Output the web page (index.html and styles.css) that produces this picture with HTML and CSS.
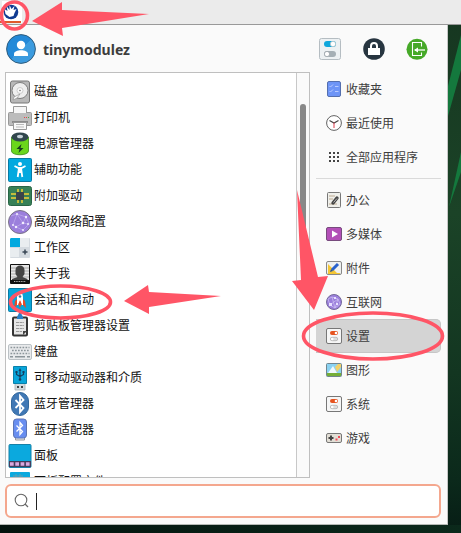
FILE: index.html
```
<!DOCTYPE html>
<html lang="zh-CN">
<head>
<meta charset="utf-8">
<title>Whisker Menu</title>
<link rel="stylesheet" href="styles.css">
</head>
<body>
<div class="desktop">
<svg class="wallpaper" viewBox="0 0 461 533">
<defs><linearGradient id="wall" x1="0" y1="0" x2="0" y2="1"><stop offset="0" stop-color="#163620"/><stop offset=".4" stop-color="#1b4327"/><stop offset=".7" stop-color="#133621"/><stop offset=".9" stop-color="#0b291b"/><stop offset="1" stop-color="#071d15"/></linearGradient>
<linearGradient id="floor"><stop offset="0" stop-color="#03130e"/><stop offset="1" stop-color="#0b291b"/></linearGradient></defs>
<path fill="url(#wall)" d="M0 0h461v533H0z"/><path fill="url(#floor)" d="M0 525h461v8H0z"/>
<path fill="#14783d" d="M461 35v35l-13 46V86z"/><path fill="#14783d" d="M461 152l-12 55 12-35z"/>
</svg>
<header class="panel">
<svg class="launcher" viewBox="0 0 24 24"><path fill="#fff" d="M2 1h20v22H2z"/><circle cx="11" cy="12" r="7.300" fill="#103b91"/><path fill="#fff" d="M4.500 9l3 2-1-5 3 4V5l2 4 3-3-1 4 3-1-2 4-1 3-4 1-4-3z"/><path fill="#e05a2c" d="M0 21h21v2H0z"/></svg>
</header>
<main class="menu">
<div class="profile">
<svg class="avatar" viewBox="0 0 30 30"><defs><linearGradient id="av" x1="0" y1="0" x2="1" y2="1"><stop offset=".5" stop-color="#2489d8"/><stop offset=".5" stop-color="#3b9bdf"/></linearGradient></defs><circle cx="15" cy="15" r="14.400" fill="url(#av)" stroke="#315d7d"/><circle cx="15" cy="11" r="4.200" fill="#fff"/><path fill="#fff" d="M8 22v-2c0-5 14-5 14 0v2z"/></svg>
<span class="username">tinymodulez</span>
<div class="actions">
<svg width="22" height="22" viewBox="0 0 22 22"><rect x=".5" y=".5" width="21" height="21" rx="2" fill="#edf1f3" stroke="#b5bdc2"/><rect x="5" y="3" width="12" height="6" rx="3" fill="#0fa7dc"/><circle cx="14" cy="6" r="2.700" fill="#fff" stroke="#aab8be" stroke-width=".6"/><rect x="5" y="13" width="12" height="6" rx="3" fill="#a5afb5"/><circle cx="8" cy="16" r="2.600" fill="#fff" stroke="#929ca2" stroke-width=".7"/></svg>
<svg width="22" height="22" viewBox="0 0 22 22"><circle cx="11" cy="11" r="10.800" fill="#273540"/><path fill="none" stroke="#fff" stroke-width="2" d="M8 11V8a3 3 0 016 0v3"/><path fill="#fff" d="M5 10h12v7H5z"/></svg>
<svg width="22" height="22" viewBox="0 0 22 22"><circle cx="11" cy="11.300" r="10.500" fill="#46a928"/><path fill="none" stroke="#fff" stroke-width="1.100" d="M15.500 8.500v-4h-9v13h9v-3"/><path fill="none" stroke="#fff" stroke-width="1.300" d="M19 12H9"/><path fill="#fff" d="M8 12l4-2.500v5z"/></svg>
</div>
</div>
<div class="content">
<section class="apps">
<ul class="app-list">
<li><svg viewBox="0 0 24 24"><rect x="2.500" y="1" width="19" height="22" rx="2" fill="#b8b8b8" stroke="#777"/><circle cx="12" cy="10.500" r="8" fill="#eee" stroke="#666" stroke-width=".8"/><circle cx="12" cy="10.500" r="3" fill="#f9f9f9" stroke="#bbb" stroke-width=".7"/><circle cx="12" cy="10.500" r=".8" fill="#777"/><path fill="#fff" stroke="#888" stroke-width=".6" d="M5 20l1-3 6-3-3 4z"/></svg>磁盘</li>
<li><svg viewBox="0 0 24 24"><path fill="#f6f6f6" stroke="#999" d="M5.500.5h13v9h-13z"/><rect x=".5" y="6.500" width="23" height="13" rx="1" fill="#bcbcbc" stroke="#999"/><path fill="#f6f6f6" d="M6 6h12v1H6z"/><path fill="#8b8b8b" d="M4 15h16v2H4z"/><path fill="#f8f8f8" stroke="#999" d="M5.500 16.500h13v7h-13z"/><path stroke="#bbb" d="M8 18.500h8M8 21h8"/><path stroke="#e84444" d="M16 11.500h1M18 11.500h1"/><path stroke="#42a848" d="M20 11.500h1"/></svg>打印机</li>
<li><svg viewBox="0 0 24 24"><path fill="#6ad61c" stroke="#3c8b1c" stroke-width=".8" d="M3.500 5v14c0 5 17 5 17 0V5z"/><ellipse cx="12" cy="5" rx="8.500" ry="4.500" fill="#31464d"/><ellipse cx="12" cy="4.500" rx="3" ry="1.800" fill="#c7d2d9"/><path fill="#193d21" d="M13.500 12l-5 5h3l-1 4 5-5h-3z"/></svg>电源管理器</li>
<li><svg viewBox="0 0 24 24"><rect x=".5" y=".5" width="23" height="23" rx="1" fill="#03a9df" stroke="#087ba5"/><circle cx="12" cy="6" r="2" fill="#fff"/><path fill="none" stroke="#fff" stroke-width="1.800" d="M6.500 8l4 2h3l4-2M9.700 19l1-7h2.600l1 7"/><path fill="#fff" d="M10 9h4v6h-4z"/></svg>辅助功能</li>
<li><svg viewBox="0 0 24 24"><rect x=".5" y="2.500" width="23" height="19" rx="2" fill="#378057" stroke="#286545"/><path stroke="#f2ce35" stroke-width="1.500" d="M10 5v5M14 5v5M10 14v5M14 14v5M3 10h6M3 14h6M15 10h6M15 14h6"/><path fill="#39434a" d="M8 8h8v8H8z"/></svg>附加驱动</li>
<li><svg viewBox="0 0 24 24"><circle cx="12" cy="12" r="11.500" fill="#9b7fdc" stroke="#7a7486"/><path fill="none" stroke="#c4b6f0" stroke-width=".6" d="M3 6l6-2 9 3 3 7-6 6-7-3-3-2L9 4l6 9 5 1M8 17l7-4 3-6"/><g fill="#f2edff"><circle cx="9" cy="4" r="1"/><circle cx="18" cy="7" r="1.200"/><circle cx="5" cy="15" r="1"/><circle cx="8" cy="17" r="1.200"/><circle cx="15" cy="13" r="1.300"/><circle cx="20" cy="14" r="1"/><circle cx="15" cy="20" r="1"/></g></svg>高级网络配置</li>
<li><svg viewBox="0 0 24 24"><rect x="2" y="2" width="20" height="20" rx="1" fill="#d4dae0"/><path fill="#03a9df" d="M3 2h9v9H2V3z"/><path fill="#e9edf0" d="M12 2h9v9h-9zM2 12h9v9H2z"/><path stroke="#394754" stroke-width="1.500" d="M17 13.500v5M14.500 16h5"/></svg>工作区</li>
<li><svg viewBox="0 0 24 24"><path fill="#e6e6e6" stroke="#111" d="M2.500 2.500h19v19h-19z"/><path stroke="#aaa" d="M3 6h18M3 9h18M3 12h18M3 15h18"/><path fill="#444" d="M7.500 8c0-6 9-6 9 0v4l-2 3 5 2v4H4v-4l5.500-2-2-3z"/><path fill="#111" d="M3 18h18v3H3z"/><path stroke="#bbb" stroke-dasharray="1 .7" d="M6 19.500h12"/></svg>关于我</li>
<li><svg viewBox="0 0 24 24"><rect x=".5" y=".5" width="23" height="23" rx="1" fill="#09a5d8" stroke="#087ba5"/><path fill="#e84a27" d="M6 20l1-7 2-2h6l2 2 1 7-3-3H9z"/><path fill="#fff" d="M9 17V9c0-3 2-5 3-6 1 1 3 3 3 6v8h-1l-2-4-2 4z"/><circle cx="12" cy="8.500" r="1.300" fill="#39759a"/><path fill="#e84a27" d="M12 12l1.500 4-1.500 4-1.500-4z"/></svg>会话和启动</li>
<li><svg viewBox="0 0 24 24"><rect x="5" y="3.500" width="14" height="18" rx="1" fill="#e5e5e5" stroke="#343434" stroke-width="2"/><path stroke="#999" stroke-dasharray="3 .6" d="M8 8.500h8M8 11.500h8M8 14.500h8M8 17.500h6"/><path fill="#287fc7" d="M9 3l2-4h2l2 4v2H9z"/><path fill="#444" d="M15 21v-4h4z"/></svg>剪贴板管理器设置</li>
<li><svg viewBox="0 0 24 24"><rect x=".5" y="4.500" width="23" height="15" rx="1.500" fill="#e8eaec" stroke="#bbc1c5"/><path stroke="#8c959a" stroke-width="1.500" stroke-dasharray="1.700 1.300" d="M2.500 7.500h19M4 10.500h17M2.500 13.500h19"/><path stroke="#8c959a" stroke-width="1.500" d="M2 16.700h3M7 16.700h10M19 16.700h3"/></svg>键盘</li>
<li><svg viewBox="0 0 24 24"><path fill="#d4dadd" stroke="#a6aeb2" stroke-width=".8" d="M7 17h10v7H7z"/><path fill="#08a5da" stroke="#0981aa" d="M5.500.5h13v17h-13z"/><path fill="none" stroke="#123f61" stroke-width="1.200" d="M12 4v10M8.500 6v2.500l3.500 2 3.500-2V6"/><path fill="#123f61" d="M12 2l1.500 3h-3zM7.500 5h2v2h-2zM14.500 5h2v2h-2z"/><circle cx="12" cy="13.500" r="1.300" fill="#123f61"/><path fill="#444" d="M9 20h2v2H9zM13 20h2v2h-2z"/></svg>可移动驱动器和介质</li>
<li><svg viewBox="0 0 24 24"><rect x="3.500" y=".5" width="17" height="23" rx="8.500" fill="#4078b5" stroke="#31679d"/><path fill="none" stroke="#fff" stroke-width="1.800" d="M7.500 8l8 8-3.500 4V4l3.500 4-8 8"/></svg>蓝牙管理器</li>
<li><svg viewBox="0 0 24 24"><path fill="#eee" stroke="#999" d="M7.500 18h9v4h-9z"/><rect x="5.500" y="1" width="13" height="19" rx="3" fill="#688ef0" stroke="#5c75b5"/><path fill="none" stroke="#fff" stroke-width="1.300" d="M8.500 7.500l6 6-2.500 3V4.500l2.500 3-6 6"/></svg>蓝牙适配器</li>
<li><svg viewBox="0 0 24 24"><rect x="1" y=".5" width="22" height="23" rx="1" fill="#0ba9de" stroke="#1581a8"/><path fill="#443d5d" d="M1 17h22v6H1z"/><path stroke="#dca9df" stroke-width="3.600" stroke-dasharray="3.700 1.600" d="M2 20h20"/></svg>面板</li>
<li><svg viewBox="0 0 24 24"><rect x="2" y="2" width="20" height="21" rx="1" fill="#0ba9de"/><path stroke="#5d9eb5" d="M8 4v4M12 4v4M5 6h10"/></svg>面板配置文件</li>
</ul>
<div class="scrollbar"><div class="thumb"></div></div>
</section>
<nav class="categories">
<a><svg viewBox="0 0 16 16"><rect x="1.500" y=".5" width="13" height="15" rx="1.500" fill="#6d94f6" stroke="#546fae"/><path fill="none" stroke="#b9cbff" d="M3.500 5l1 1 2.500-2.500M9 5.500h3.500M3.500 10l1 1L7 8.500M9 10.500h3.500"/></svg>收藏夹</a>
<a><svg viewBox="0 0 16 16"><circle cx="8" cy="8" r="7.400" fill="#fff" stroke="#626262"/><path fill="none" stroke="#444" stroke-width="1.200" d="M3.500 5.500L8 8l4.500-2.500"/><path stroke="#df3d4d" d="M8 7.500V13"/></svg>最近使用</a>
<a><svg viewBox="0 0 16 16"><path stroke="#444" stroke-width="2" stroke-dasharray="2 2" d="M3 4h10M3 8h10M3 12h10"/></svg>全部应用程序</a>
<hr>
<a><svg viewBox="0 0 16 16"><rect x="1.500" y=".5" width="13" height="15" rx="1" fill="#efefea" stroke="#777"/><path stroke="#bca990" d="M3 4h6M3 7h4M3 12h8"/><path stroke="#444" stroke-width="3.400" stroke-linecap="round" d="M7 11l4-5"/><path stroke="#bbb" d="M7.500 10.500l3.500-4"/></svg>办公</a>
<a><svg viewBox="0 0 16 16"><rect x=".5" y="1.500" width="15" height="13" rx="1.500" fill="#b34fb7" stroke="#774b7d"/><path fill="#fff" d="M6 4.500v7L12 8z"/></svg>多媒体</a>
<a><svg viewBox="0 0 16 16"><rect x=".5" y="1.500" width="15" height="13" rx="1.500" fill="#eef0ef" stroke="#888"/><path fill="#f4c633" d="M2 4l9 9h3v1H2z"/><path stroke="#2861cc" stroke-width="3" d="M6 10l6-6"/><path fill="#234e98" d="M4 12l1-3 2 2z"/></svg>附件</a>
<a><svg viewBox="0 0 16 16"><circle cx="8" cy="8" r="7.500" fill="#9b7fdc" stroke="#74699a"/><path fill="none" stroke="#d0c3f4" stroke-width=".7" d="M2 5l4-2 6 2 2 5-5 4-5-3-2-6M4 11l8-6-3 9-3-11"/><path fill="#e8e0ff" d="M3 9h3v3H3zM8 3h2v2H8zM10 9h2v2h-2z"/></svg>互联网</a>
<a class="selected"><svg viewBox="0 0 16 16"><rect x=".5" y=".5" width="15" height="15" rx="1.500" fill="#f6f6f6" stroke="#777"/><rect x="4" y="3" width="8" height="4" rx="2" fill="#e6531f"/><circle cx="10" cy="5" r="1.300" fill="#fff"/><rect x="4.300" y="9.300" width="7.400" height="3.400" rx="1.700" fill="#ddd" stroke="#aaa" stroke-width=".7"/><circle cx="6.200" cy="11" r="1.300" fill="#fff"/></svg>设置</a>
<a><svg viewBox="0 0 16 16"><rect x=".5" y="1.500" width="15" height="13" rx="1" fill="#8ad2f2" stroke="#71858e"/><path fill="#f2d16a" d="M9 5l3-3h3v3l-4 5z"/><path fill="#f1f9fc" d="M2 11l5-7 4 7z"/><path fill="#75ae37" d="M1 11h14v3H1z"/></svg>图形</a>
<a><svg viewBox="0 0 16 16"><rect x=".5" y=".5" width="15" height="15" rx="1.500" fill="#f6f6f6" stroke="#777"/><rect x="4" y="3" width="8" height="4" rx="2" fill="#e6531f"/><circle cx="10" cy="5" r="1.300" fill="#fff"/><rect x="4.300" y="9.300" width="7.400" height="3.400" rx="1.700" fill="#ddd" stroke="#aaa" stroke-width=".7"/><circle cx="6.200" cy="11" r="1.300" fill="#fff"/></svg>系统</a>
<a><svg viewBox="0 0 16 16"><rect x=".5" y="3.500" width="15" height="9" rx="1.500" fill="#e2ded5" stroke="#777"/><path stroke="#444" stroke-width="2" d="M2.500 8h5M5 5.500v5"/><path fill="#f04b58" d="M9.500 8.500h2v2h-2zM12 6h2v2h-2z"/></svg>游戏</a>
</nav>
</div>
<div class="search"><svg viewBox="0 0 16 16"><circle cx="7" cy="7" r="5.800" fill="none" stroke="#666" stroke-width="1.100"/><path stroke="#666" stroke-width="1.300" d="M11 11l3 3"/></svg><span class="caret"></span></div>
</main>
<svg class="annotations" viewBox="0 0 461 533">
<g fill="none" stroke="#ff5566" stroke-width="3.600"><ellipse cx="14.500" cy="15.500" rx="13" ry="13.500"/><ellipse cx="60.500" cy="302" rx="50" ry="16"/><ellipse cx="373" cy="336" rx="69.500" ry="23"/></g>
<g fill="#ff5566"><path d="M32 21L62 2v8l87 4-87 14 1 8z"/><path d="M124 301l24-16 1 7 72 4-72 11v7z"/><path d="M297 190l21 87 10-1-14 34-22-29 9-1z"/></g>
</svg>
</div>
</body>
</html>
```
FILE: styles.css
```
* { box-sizing: border-box; }
body { margin: 0; font-family: "Noto Sans", "Noto Sans CJK SC", sans-serif; font-size: 12px; color: #3d3d3d; }
.desktop { position: relative; width: 461px; height: 533px; overflow: hidden; isolation: isolate; }
.wallpaper { position: absolute; inset: 0; z-index: -1; }
.panel { height: 25px; background: #ebebeb; border-bottom: 1px solid #999; }
.launcher { display: block; width: 24px; height: 24px; }
.menu { width: 448px; height: 500px; background: #fafafa; border-right: 1px solid #c6c6c6; border-bottom: 1px solid #b5b9b5; padding: 9px 6px 6px 5px; display: flex; flex-direction: column; }
.profile { height: 30px; display: flex; align-items: center; padding-left: 1px; }
.avatar { width: 30px; height: 30px; }
.username { margin-left: 7px; font: bold 14px "Noto Sans", sans-serif; }
.actions { margin-left: auto; margin-right: 13px; display: flex; gap: 21px; }
.actions svg:first-child { margin-right: 1px; }
.content { display: flex; margin-top: 8px; height: 406px; }
.apps { width: 305px; height: 406px; display: flex; border: 1px solid #bfbfbf; background: #fff; overflow: hidden; }
.app-list { list-style: none; flex: 1; margin: 0; padding: 6px 0 0 2px; color: #111; overflow: hidden; }
.app-list li { height: 26px; display: flex; align-items: center; gap: 2px; white-space: nowrap; line-height: 18px; }
.app-list svg { width: 24px; height: 24px; flex: none; overflow: visible; }
.scrollbar { width: 13px; border-left: 1px solid #c8c8c8; background: #fafafa; padding: 31px 3px 0; }
.thumb { width: 6px; height: 153px; border-radius: 3px; background: #888; }
.categories { width: 125px; margin-left: 6px; }
.categories a { height: 34px; display: flex; align-items: center; gap: 4px; padding-left: 10px; border: 1px solid transparent; border-left: 0; border-radius: 0 5px 5px 0; }
.categories svg { width: 16px; height: 16px; }
.categories hr { height: 1px; border: 0; background: #dadada; margin: 4px 0; }
.categories .selected { background: #d4d4d4; border-color: #c6c6c6; }
.search { height: 34px; margin-top: 6px; border: 2px solid #f4a78e; border-radius: 6px; background: #fff; display: flex; align-items: center; padding-left: 7px; }
.search svg { width: 16px; height: 16px; }
.caret { width: 1px; height: 17px; margin-left: 6px; background: #222; }
.annotations { position: absolute; inset: 0; width: 461px; height: 533px; pointer-events: none; }
```
